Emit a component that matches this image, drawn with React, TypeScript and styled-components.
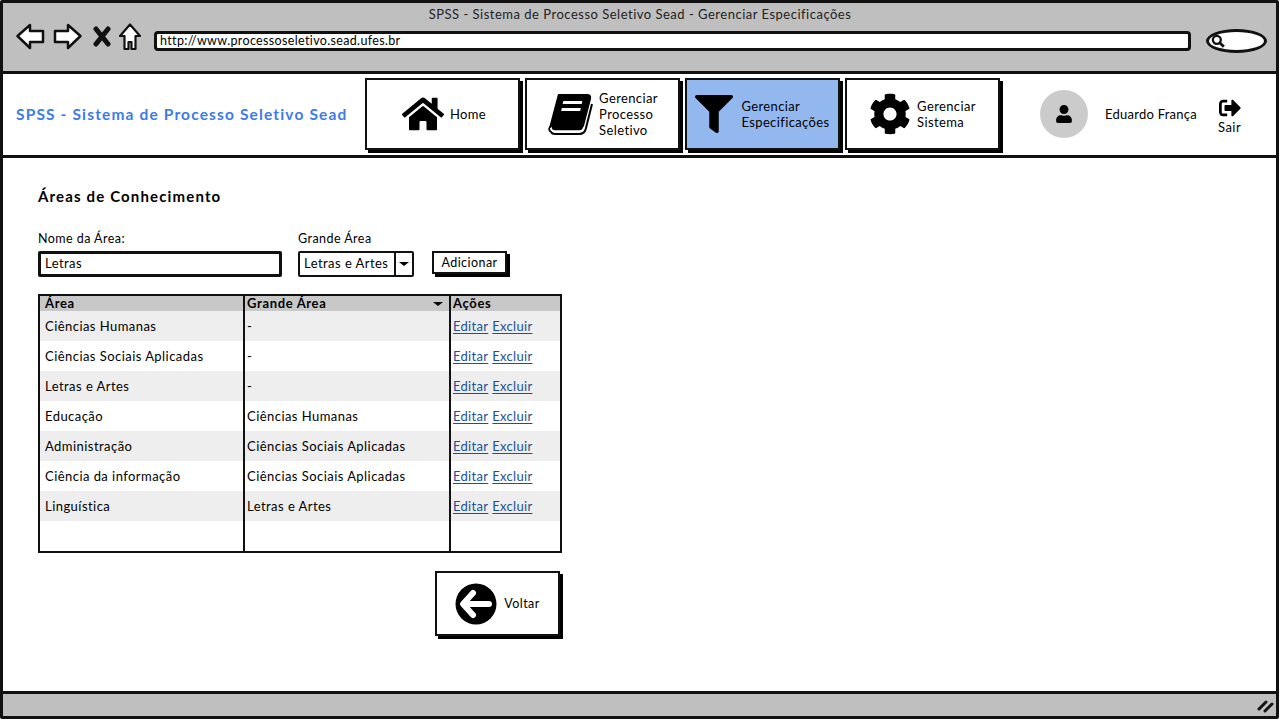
import React from "react";
import styled, { createGlobalStyle } from "styled-components";
import { FaHome, FaFilter, FaCog, FaUser, FaSignOutAlt } from "react-icons/fa";

const GlobalStyle = createGlobalStyle`
  html, body {
    margin: 0;
    padding: 0;
    background: #fff;
  }
  body {
    font-family: "Lato", "Open Sans", sans-serif;
    font-size: 13px;
    color: #000;
  }
  * {
    box-sizing: border-box;
  }
`;

const Window = styled.div`
  width: 1279px;
  height: 719px;
  border: 3px solid #111;
  border-radius: 2px;
  display: flex;
  flex-direction: column;
  overflow: hidden;
  letter-spacing: 0.45px;
`;

const BrowserBar = styled.div`
  height: 71px;
  flex-shrink: 0;
  background: #bfbfbf;
  border-bottom: 3px solid #111;
  padding: 2px 9px 0 13px;
`;

const PageTitle = styled.div`
  text-align: center;
  font-size: 13px;
  line-height: 18px;
  padding-right: 3px;
  color: #222;
  letter-spacing: 0.5px;
`;

const BrowserRow = styled.div`
  display: flex;
  align-items: center;
  height: 28px;
`;

const ToolIcon = styled.svg`
  display: block;
  flex-shrink: 0;
`;

const UrlBar = styled.div`
  width: 1039px;
  height: 20px;
  margin-left: 13px;
  margin-top: 8px;
  background: #fff;
  border: 3px solid #111;
  border-radius: 4px;
  padding-left: 3px;
  font-size: 12.5px;
  line-height: 14px;
  letter-spacing: 0.35px;
`;

const SearchOval = styled.div`
  width: 61px;
  height: 24px;
  margin-left: 15px;
  margin-top: 8px;
  background: #fff;
  border: 3px solid #111;
  border-radius: 50%;
  display: flex;
  align-items: center;
  padding-left: 2px;
`;

const Header = styled.header`
  height: 84px;
  flex-shrink: 0;
  border-bottom: 3px solid #111;
  display: flex;
  align-items: flex-start;
  padding-top: 4px;
`;

const Logo = styled.div`
  width: 362px;
  height: 72px;
  padding-left: 13px;
  display: flex;
  align-items: center;
  color: #3b7bea;
  font-size: 15.5px;
  font-weight: 700;
  letter-spacing: 1.15px;
`;

const Nav = styled.nav`
  display: flex;
  gap: 5px;
`;

const NavButton = styled.div<{ $active?: boolean; $gap?: number; $inset?: number }>`
  width: 155px;
  height: 72px;
  border: 2px solid #111;
  box-shadow: 3px 3px 0 #000;
  background: ${(p) => (p.$active ? "#92b8ef" : "#fff")};
  display: flex;
  align-items: center;
  justify-content: center;
  gap: ${(p) => p.$gap ?? 6}px;
  padding-left: ${(p) => p.$inset ?? 0}px;
  font-size: 13px;
  line-height: 16px;
  letter-spacing: 0.38px;
`;

const NavLabel = styled.div`
  white-space: nowrap;
`;

const User = styled.div`
  display: flex;
  align-items: center;
  height: 72px;
  margin-left: 40px;
`;

const Avatar = styled.div`
  width: 48px;
  height: 48px;
  border-radius: 50%;
  background: #cbcbcb;
  display: flex;
  align-items: center;
  justify-content: center;
`;

const UserName = styled.div`
  margin-left: 17px;
  width: 113px;
  white-space: nowrap;
  letter-spacing: 0.25px;
`;

const Logout = styled.div`
  display: flex;
  flex-direction: column;
  align-items: center;
  gap: 1px;
  margin-top: 3px;
  line-height: 15px;
`;

const Main = styled.main`
  flex: 1;
  padding: 29px 0 0 35px;
`;

const Heading = styled.h1`
  margin: 0;
  font-size: 15px;
  line-height: 19px;
  font-weight: 700;
  letter-spacing: 1.15px;
`;

const Form = styled.div`
  display: flex;
  align-items: flex-end;
  margin-top: 25px;
`;

const Field = styled.label<{ $width: number }>`
  display: flex;
  flex-direction: column;
  gap: 4px;
  width: ${(p) => p.$width}px;
  margin-right: 16px;
  font-size: 12.5px;
  line-height: 16px;
`;

const TextBox = styled.div`
  height: 26px;
  border: 3px solid #111;
  border-radius: 2px;
  padding-left: 4px;
  font-size: 13px;
  line-height: 18px;
`;

const Select = styled.div`
  height: 26px;
  border: 2px solid #111;
  border-radius: 2px;
  display: flex;
  font-size: 13px;
  line-height: 20px;
`;

const SelectValue = styled.div`
  flex: 1;
  padding-left: 4px;
  border-right: 2px solid #111;
  white-space: nowrap;
`;

const SelectArrow = styled.div`
  width: 16px;
  display: flex;
  align-items: center;
  justify-content: center;
`;

const DownArrow = styled.span<{ $size: number }>`
  width: 0;
  height: 0;
  border-left: ${(p) => p.$size}px solid transparent;
  border-right: ${(p) => p.$size}px solid transparent;
  border-top: ${(p) => p.$size - 1}px solid #000;
`;

const AddButton = styled.div`
  width: 75px;
  height: 23px;
  margin-left: 2px;
  margin-bottom: 3px;
  border: 2px solid #111;
  box-shadow: 3px 3px 0 #000;
  text-align: center;
  line-height: 19px;
  font-size: 12.5px;
`;

const Grid = styled.table`
  width: 524px;
  height: 259px;
  margin-top: 17px;
  border: 2px solid #111;
  border-collapse: separate;
  border-spacing: 0;
  table-layout: fixed;
`;

const HeadCell = styled.th<{ $pad: number }>`
  height: 15px;
  padding: 0 0 0 ${(p) => p.$pad}px;
  background: #c8c8c8;
  border-right: 2px solid #111;
  text-align: left;
  font-size: 13px;
  line-height: 15px;
  font-weight: 700;
  letter-spacing: 0.65px;
  &:last-child {
    border-right: 0;
  }
`;

const HeadInner = styled.div`
  display: flex;
  align-items: center;
  justify-content: space-between;
  padding-right: 6px;
`;

const Row = styled.tr<{ $shaded?: boolean }>`
  background: ${(p) => (p.$shaded ? "#eeeeee" : "#fff")};
`;

const Cell = styled.td<{ $pad: number }>`
  height: 30px;
  padding: 0 0 0 ${(p) => p.$pad}px;
  border-right: 2px solid #111;
  white-space: nowrap;
  font-size: 13px;
  &:last-child {
    border-right: 0;
  }
`;

const ActionLink = styled.a`
  color: #1a5296;
  text-decoration: underline;
  text-underline-offset: 2px;
  margin-right: 4px;
  letter-spacing: 0.3px;
`;

const BackButton = styled.div`
  width: 125px;
  height: 65px;
  margin: 18px 0 0 397px;
  border: 2px solid #111;
  box-shadow: 3px 3px 0 #000;
  display: flex;
  align-items: center;
  justify-content: center;
  gap: 7px;
  font-size: 12.5px;
`;

const Footer = styled.footer`
  height: 25px;
  flex-shrink: 0;
  background: #bfbfbf;
  border-top: 3px solid #111;
  display: flex;
  align-items: center;
  justify-content: flex-end;
  padding-right: 1px;
`;

const BookIcon = () => (
  <svg width="46" height="42" viewBox="0 0 46 42">
    <path
      d="M11 1 H40 Q45 1 44 6 L37 33 Q36 38 31 38 H8 Q5 38 5 35 L5 34 L2 35 Z"
      fill="#000"
    />
    <path
      d="M5 32 Q0 36 4 39 Q5 41 8 41 H32 Q38 41 39 35 L45 11"
      fill="none"
      stroke="#000"
      strokeWidth="2"
    />
    <path d="M4 35 Q4 38 8 38 H33 Q36 38 37 34" fill="none" stroke="#fff" strokeWidth="1.5" />
    <rect x="15" y="8" width="19" height="3" fill="#fff" transform="skewX(-12) translate(3 0)" />
    <rect x="14" y="15" width="19" height="3" fill="#fff" transform="skewX(-12) translate(4 0)" />
  </svg>
);

const BackCircle = () => (
  <svg width="42" height="42" viewBox="0 0 42 42">
    <circle cx="21" cy="21" r="20.5" fill="#000" />
    <path
      d="M18 10 L8 21 L18 32 M10 21 H34"
      fill="none"
      stroke="#fff"
      strokeWidth="6"
      strokeLinecap="round"
      strokeLinejoin="round"
    />
  </svg>
);

const rows = [
  ["Ciências Humanas", "-"],
  ["Ciências Sociais Aplicadas", "-"],
  ["Letras e Artes", "-"],
  ["Educação", "Ciências Humanas"],
  ["Administração", "Ciências Sociais Aplicadas"],
  ["Ciência da informação", "Ciências Sociais Aplicadas"],
  ["Linguística", "Letras e Artes"],
];

const App: React.FC = () => {
  return (
    <>
      <GlobalStyle />
      <Window>
        <BrowserBar>
          <PageTitle>SPSS - Sistema de Processo Seletivo Sead - Gerenciar Especificações</PageTitle>
          <BrowserRow>
            <ToolIcon width="37" height="28" viewBox="0 0 37 28">
              <path
                d="M1.5 13 L14 2 V8 H27 V19 H14 V25 Z"
                fill="#fff"
                stroke="#111"
                strokeWidth="2.5"
                strokeLinejoin="round"
              />
            </ToolIcon>
            <ToolIcon width="40" height="28" viewBox="0 0 40 28">
              <path
                d="M27.5 13 L15 2 V8 H2 V19 H15 V25 Z"
                fill="#fff"
                stroke="#111"
                strokeWidth="2.5"
                strokeLinejoin="round"
              />
            </ToolIcon>
            <ToolIcon width="26" height="28" viewBox="0 0 26 28">
              <path
                d="M3 6 L15 21 M15 6 L3 21"
                fill="none"
                stroke="#111"
                strokeWidth="5"
                strokeLinecap="round"
              />
            </ToolIcon>
            <ToolIcon width="22" height="28" viewBox="0 0 22 28">
              <path
                d="M11 1.5 L21 13 H16.5 V26 H12.5 V19 H9.5 V26 H5.5 V13 H1 Z"
                fill="#fff"
                stroke="#111"
                strokeWidth="2.2"
                strokeLinejoin="round"
              />
            </ToolIcon>
            <UrlBar>http://www.processoseletivo.sead.ufes.br</UrlBar>
            <SearchOval>
              <svg width="14" height="14" viewBox="0 0 12 12">
                <circle cx="5" cy="5" r="3.4" fill="none" stroke="#111" strokeWidth="2" />
                <path d="M7.5 7.5 L11 11" stroke="#111" strokeWidth="2.4" />
              </svg>
            </SearchOval>
          </BrowserRow>
        </BrowserBar>

        <Header>
          <Logo>SPSS - Sistema de Processo Seletivo Sead</Logo>
          <Nav>
            <NavButton $inset={3}>
              <FaHome size={42} />
              <NavLabel>Home</NavLabel>
            </NavButton>
            <NavButton>
              <BookIcon />
              <NavLabel>
                Gerenciar
                <br />
                Processo
                <br />
                Seletivo
              </NavLabel>
            </NavButton>
            <NavButton $active $gap={8}>
              <FaFilter size={38} />
              <NavLabel>
                Gerenciar
                <br />
                Especificações
              </NavLabel>
            </NavButton>
            <NavButton>
              <FaCog size={42} />
              <NavLabel>
                Gerenciar
                <br />
                Sistema
              </NavLabel>
            </NavButton>
          </Nav>
          <User>
            <Avatar>
              <FaUser size={18} />
            </Avatar>
            <UserName>Eduardo França</UserName>
            <Logout>
              <FaSignOutAlt size={22} />
              Sair
            </Logout>
          </User>
        </Header>

        <Main>
          <Heading>Áreas de Conhecimento</Heading>
          <Form>
            <Field $width={244}>
              Nome da Área:
              <TextBox>Letras</TextBox>
            </Field>
            <Field $width={116}>
              Grande Área
              <Select>
                <SelectValue>Letras e Artes</SelectValue>
                <SelectArrow>
                  <DownArrow $size={5} />
                </SelectArrow>
              </Select>
            </Field>
            <AddButton>Adicionar</AddButton>
          </Form>
          <Grid>
            <colgroup>
              <col width="205" />
              <col width="206" />
              <col width="109" />
            </colgroup>
            <thead>
              <tr>
                <HeadCell $pad={5}>Área</HeadCell>
                <HeadCell $pad={2}>
                  <HeadInner>
                    Grande Área
                    <DownArrow $size={5} />
                  </HeadInner>
                </HeadCell>
                <HeadCell $pad={2}>Ações</HeadCell>
              </tr>
            </thead>
            <tbody>
              {rows.map(([area, grande], i) => (
                <Row key={area} $shaded={i % 2 === 0}>
                  <Cell $pad={5}>{area}</Cell>
                  <Cell $pad={2}>{grande}</Cell>
                  <Cell $pad={2}>
                    <ActionLink>Editar</ActionLink>
                    <ActionLink>Excluir</ActionLink>
                  </Cell>
                </Row>
              ))}
              <Row>
                <Cell $pad={5} />
                <Cell $pad={2} />
                <Cell $pad={2} />
              </Row>
            </tbody>
          </Grid>
          <BackButton>
            <BackCircle />
            Voltar
          </BackButton>
        </Main>

        <Footer>
          <svg width="18" height="16" viewBox="0 0 18 16">
            <path
              d="M2 12 L9 5 M8 14 L15 7"
              stroke="#111"
              strokeWidth="3"
              strokeLinecap="round"
              fill="none"
            />
          </svg>
        </Footer>
      </Window>
    </>
  );
};

export default App;
